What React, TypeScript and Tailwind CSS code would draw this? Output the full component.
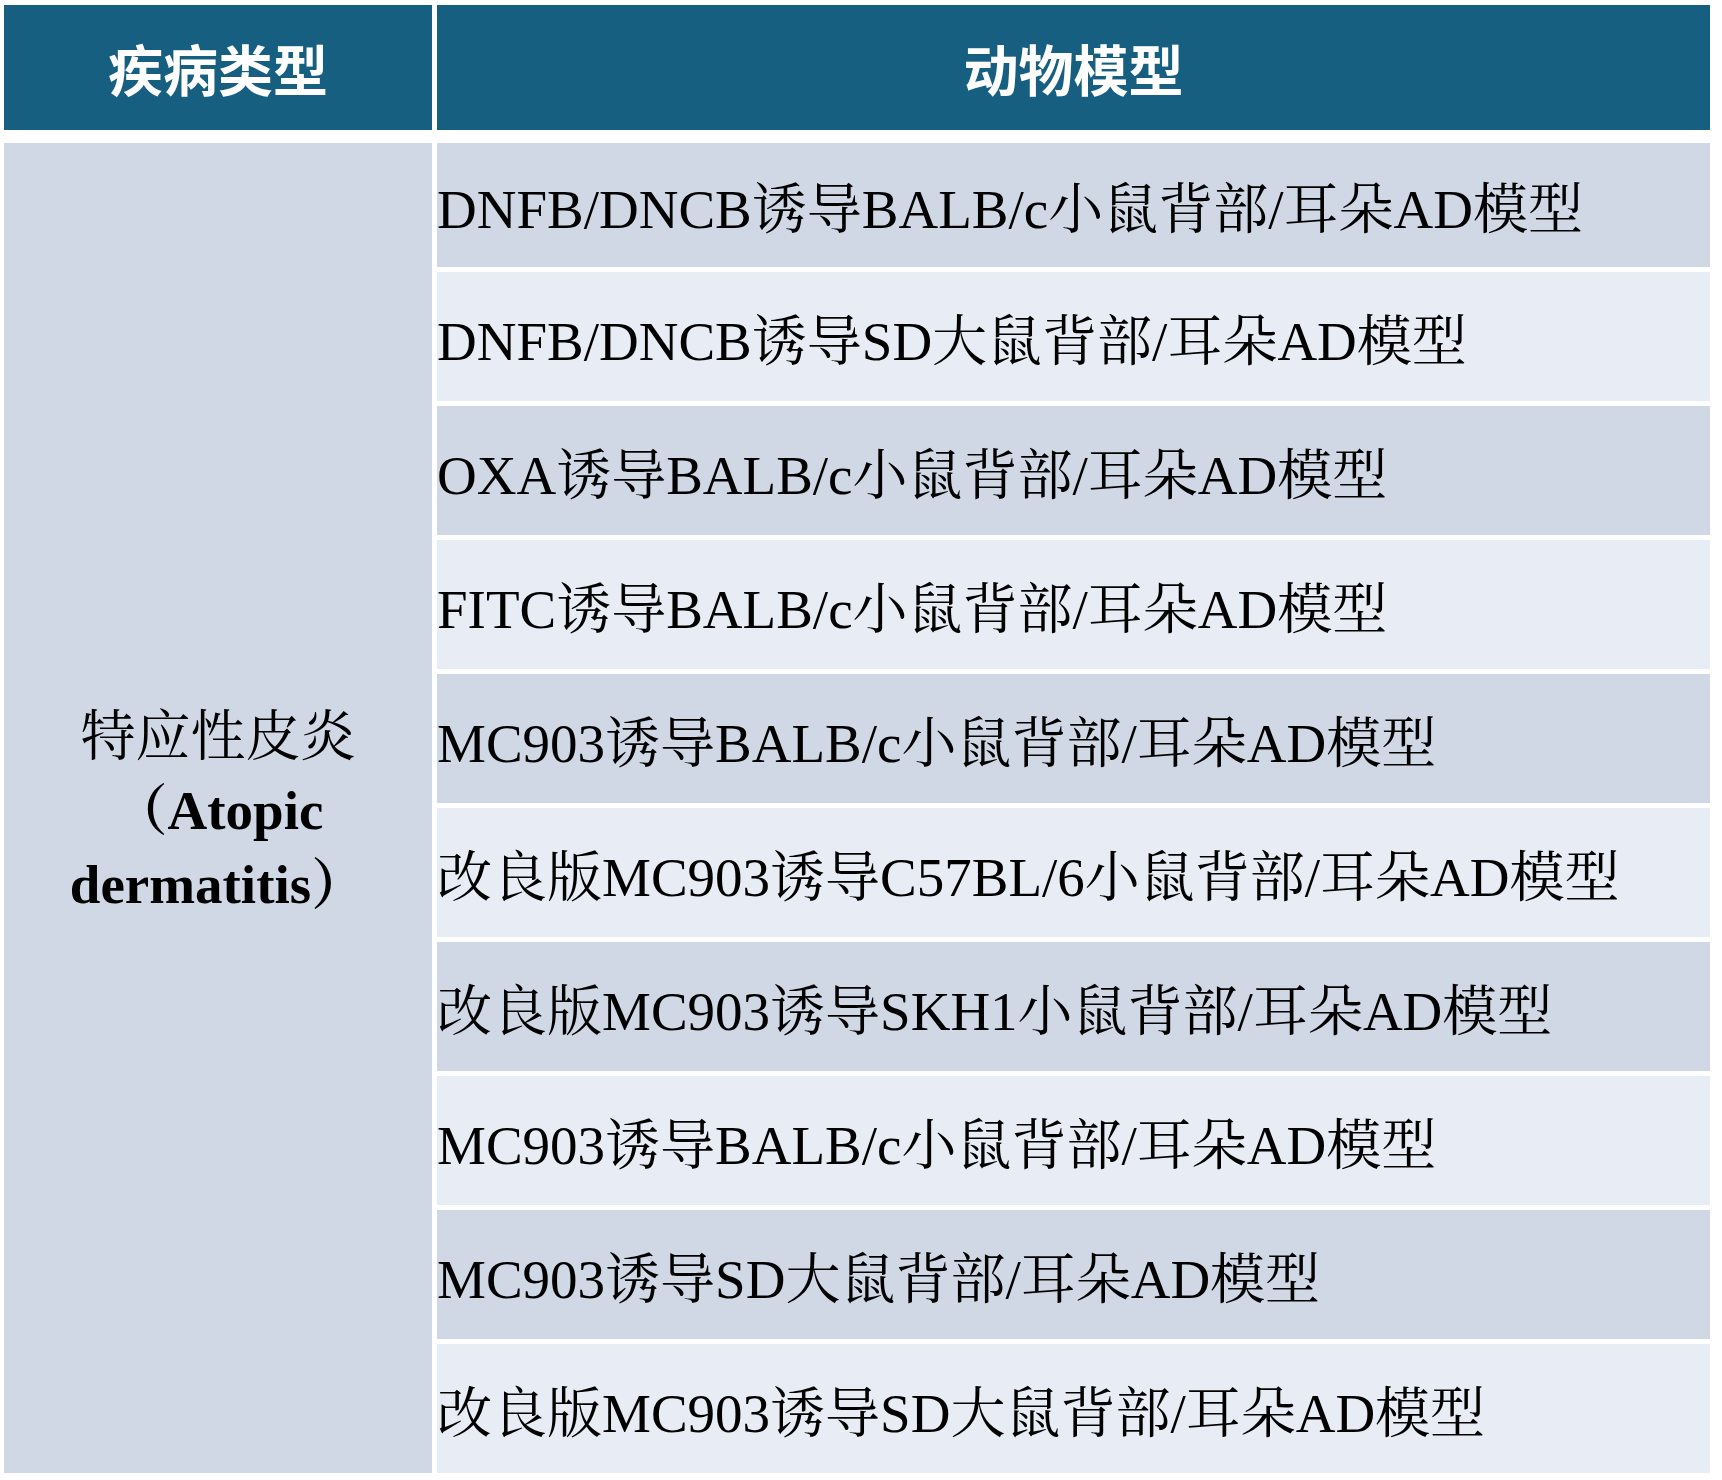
import React from "react";

const rows = [
  "DNFB/DNCB诱导BALB/c小鼠背部/耳朵AD模型",
  "DNFB/DNCB诱导SD大鼠背部/耳朵AD模型",
  "OXA诱导BALB/c小鼠背部/耳朵AD模型",
  "FITC诱导BALB/c小鼠背部/耳朵AD模型",
  "MC903诱导BALB/c小鼠背部/耳朵AD模型",
  "改良版MC903诱导C57BL/6小鼠背部/耳朵AD模型",
  "改良版MC903诱导SKH1小鼠背部/耳朵AD模型",
  "MC903诱导BALB/c小鼠背部/耳朵AD模型",
  "MC903诱导SD大鼠背部/耳朵AD模型",
  "改良版MC903诱导SD大鼠背部/耳朵AD模型",
];

const serif =
  "font-['Liberation_Serif','Noto_Serif_CJK_SC','Noto_Sans_CJK_SC',serif]";

export default function App() {
  return (
    <div className="w-[1722px] h-[1480px] bg-white pt-[5px] pl-[4px]">
      {/* header */}
      <div className="flex gap-[5px] h-[125px]">
        <div className="w-[428px] bg-[#175f80] flex items-center justify-center">
          <span className="font-['Noto_Sans_CJK_SC',sans-serif] font-bold text-[55px] text-white leading-none">
            疾病类型
          </span>
        </div>
        <div className="w-[1273px] bg-[#175f80] flex items-center justify-center">
          <span className="font-['Noto_Sans_CJK_SC',sans-serif] font-bold text-[55px] text-white leading-none">
            动物模型
          </span>
        </div>
      </div>

      {/* body */}
      <div className="flex gap-[5px] mt-[13px]">
        <div
          className={`w-[428px] bg-[#d0d7e5] flex flex-col items-center justify-center text-black text-[55px] leading-[74px] ${serif}`}
        >
          <div className="text-center pt-[6px]">
            <div>特应性皮炎</div>
            <div className="font-bold">（Atopic</div>
            <div className="font-bold">dermatitis）</div>
          </div>
        </div>
        <div className="w-[1273px] flex flex-col gap-[5px]">
          {rows.map((label, i) => (
            <div
              key={i}
              className={`flex items-center ${i === 0 ? "h-[124px]" : "h-[129px]"} ${
                i % 2 === 0 ? "bg-[#d0d7e5]" : "bg-[#e8ecf4]"
              }`}
            >
              <span
                className={`pt-[9px] text-[55px] text-black leading-none whitespace-nowrap ${serif}`}
              >
                {label}
              </span>
            </div>
          ))}
        </div>
      </div>
    </div>
  );
}
